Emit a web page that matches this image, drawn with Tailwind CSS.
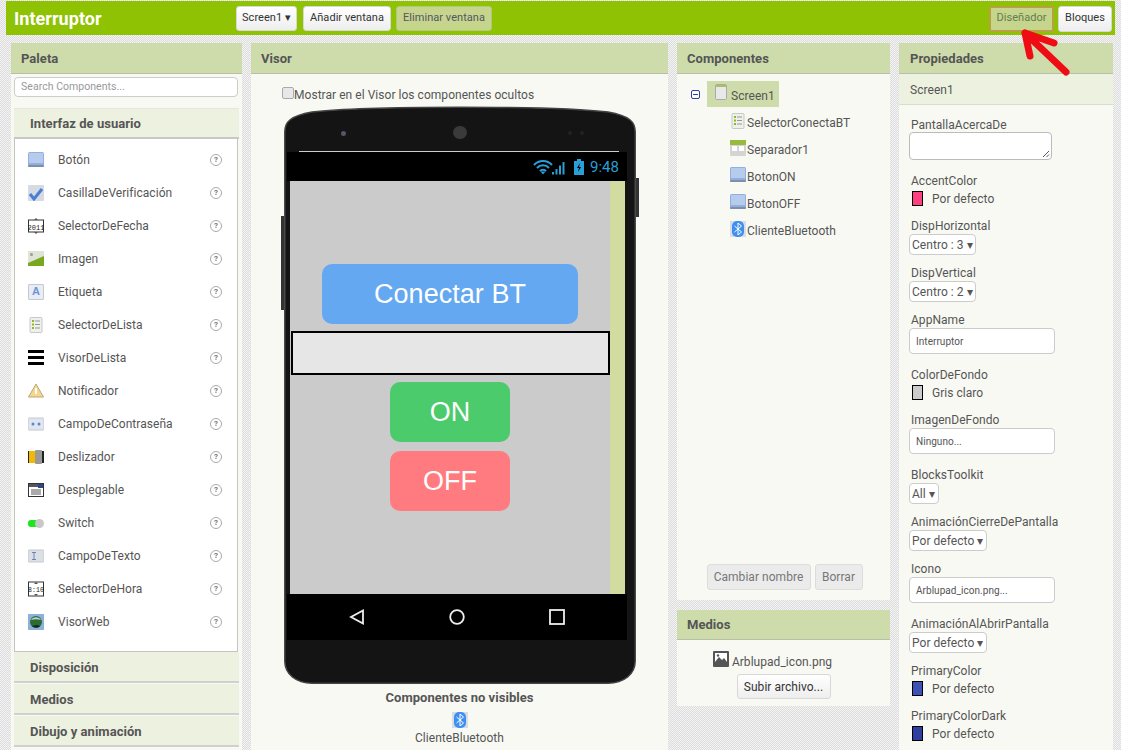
<!DOCTYPE html>
<html lang="es">
<head>
  <meta charset="UTF-8">
  <title>Interruptor</title>
  <script src="https://cdn.jsdelivr.net/npm/@tailwindcss/browser@4"></script>
</head>
<body class="font-['Roboto',sans-serif] text-[12px] tracking-[0.04px] text-[#555]">
<div class="relative h-[750px] w-[1121px] overflow-hidden bg-[repeating-conic-gradient(#dcdcdc_0_25%,#f4f4f4_0_50%)] bg-[length:2px_2px]">

  <!-- barra superior -->
  <div class="mx-[6px] mt-[1px] flex h-[34px] items-center bg-[#8fc202] pl-[8px] pr-[3px] pt-[1px]">
    <div class="w-[222px] text-[18px] leading-none font-bold text-white">Interruptor</div>
    <button class="h-[25px] w-[61px] rounded-[3px] border border-[#d8d8d8] bg-gradient-to-b from-white to-[#eee] text-[11px] text-[#333]">Screen1 ▾</button>
    <button class="ml-[6px] h-[25px] w-[88px] rounded-[3px] border border-[#d8d8d8] bg-gradient-to-b from-white to-[#eee] text-[11px] text-[#333]">Añadir ventana</button>
    <button class="ml-[5px] h-[25px] w-[96px] rounded-[3px] border border-[#b3c77e] bg-[#c5d68c] text-[11px] text-[#556]">Eliminar ventana</button>
    <div class="flex-1"></div>
    <button class="h-[26px] w-[65px] rounded-[2px] border-2 border-[#b9a045] bg-[#c5d68c] text-[11px] text-[#667a50]">Diseñador</button>
    <button class="ml-[4px] h-[26px] w-[54px] rounded-[3px] border border-[#d8d8d8] bg-gradient-to-b from-white to-[#eee] text-[11px] text-[#333]">Bloques</button>
  </div>

  <div class="mt-[8px] flex items-start pl-[11px]">

    <!-- Paleta -->
    <div class="h-[720px] w-[231px] bg-[#f8f9f3]">
      <div class="flex h-[31px] items-center border-b border-[#b8bfa8] bg-[#cddcaa] px-[10px] pt-[1px] text-[13px] font-bold">Paleta</div>
      <div class="px-[3px]">
        <div class="mt-[3px] flex h-[20px] w-[224px] items-center rounded-[4px] border border-[#ccc] bg-white px-[6px] text-[10.5px] text-[#999]">Search Components...</div>
        <div class="mt-[11px] flex h-[31px] items-center border-t border-b-2 border-t-[#e4e8d8] border-b-[#c8c8c8] bg-[#edf1e0] px-[16px] pt-[2px] text-[13px] font-bold">Interfaz de usuario</div>
        <div class="h-[513px] w-[224px] border-x border-b border-[#c4c4c4] bg-white pt-[4px]">

          <div class="flex h-[33px] items-center pl-[13px] pr-[15px]">
            <svg class="w-[16px] h-[16px]" viewBox="0 0 16 16"><rect width="16" height="15" rx="1.500" fill="#8fb0e0"/><rect x="1" y="1" width="14" height="10" fill="#b7ccec"/><rect y="13" width="16" height="2" rx="1" fill="#7f8faa"/></svg>
            <span class="ml-[14px] flex-1">Botón</span>
            <span class="flex h-[12px] w-[12px] items-center justify-center rounded-full border border-[#aaa] text-[8px] font-bold text-[#777]">?</span>
          </div>
          <div class="flex h-[33px] items-center pl-[13px] pr-[15px]">
            <svg class="w-[16px] h-[16px]" viewBox="0 0 16 16"><rect width="16" height="16" rx="1" fill="#d5dae3"/><path d="M2 9l4 5 8-10" stroke="#4b7fd0" stroke-width="3" fill="none"/></svg>
            <span class="ml-[14px] flex-1">CasillaDeVerificación</span>
            <span class="flex h-[12px] w-[12px] items-center justify-center rounded-full border border-[#aaa] text-[8px] font-bold text-[#777]">?</span>
          </div>
          <div class="flex h-[33px] items-center pl-[13px] pr-[15px]">
            <svg class="w-[16px] h-[16px]" viewBox="0 0 16 16"><rect x="0.5" y="2" width="15" height="12" fill="#fff" stroke="#333"/><path d="M8 0l2 2H6zM8 16l2-2H6z" fill="#555"/><text x="8" y="11.500" text-anchor="middle" font-size="7" font-family="Liberation Mono" fill="#222">2011</text></svg>
            <span class="ml-[14px] flex-1">SelectorDeFecha</span>
            <span class="flex h-[12px] w-[12px] items-center justify-center rounded-full border border-[#aaa] text-[8px] font-bold text-[#777]">?</span>
          </div>
          <div class="flex h-[33px] items-center pl-[13px] pr-[15px]">
            <svg class="w-[16px] h-[16px]" viewBox="0 0 16 16"><rect width="16" height="15" fill="#dfe5d6"/><path d="M0 12l16-7v10H0z" fill="#79a820"/><circle cx="3.5" cy="3.5" r="1.5" fill="#999"/></svg>
            <span class="ml-[14px] flex-1">Imagen</span>
            <span class="flex h-[12px] w-[12px] items-center justify-center rounded-full border border-[#aaa] text-[8px] font-bold text-[#777]">?</span>
          </div>
          <div class="flex h-[33px] items-center pl-[13px] pr-[15px]">
            <span class="flex h-[16px] w-[16px] items-center justify-center rounded-[1px] border border-[#c4c8d0] bg-[#e8edf5] font-['Liberation_Sans',sans-serif] text-[11px] font-bold text-[#6f96d4]">A</span>
            <span class="ml-[14px] flex-1">Etiqueta</span>
            <span class="flex h-[12px] w-[12px] items-center justify-center rounded-full border border-[#aaa] text-[8px] font-bold text-[#777]">?</span>
          </div>
          <div class="flex h-[33px] items-center pl-[13px] pr-[15px]">
            <svg class="w-[16px] h-[16px]" viewBox="0 0 16 16"><rect x="2" y="0.500" width="12" height="15" rx="1" fill="#eef0ea" stroke="#c8c8c8"/><path d="M4 4h2M4 7.500h2M4 11h2" stroke="#8fb52a" stroke-width="2"/><path d="M7 4h5M7 7.500h5M7 11h5" stroke="#999"/></svg>
            <span class="ml-[14px] flex-1">SelectorDeLista</span>
            <span class="flex h-[12px] w-[12px] items-center justify-center rounded-full border border-[#aaa] text-[8px] font-bold text-[#777]">?</span>
          </div>
          <div class="flex h-[33px] items-center pl-[13px] pr-[15px]">
            <svg class="w-[16px] h-[16px]" viewBox="0 0 16 16"><path d="M0 0h16v3H0zM0 6h16v3H0zM0 12h16v3H0z" fill="#000"/></svg>
            <span class="ml-[14px] flex-1">VisorDeLista</span>
            <span class="flex h-[12px] w-[12px] items-center justify-center rounded-full border border-[#aaa] text-[8px] font-bold text-[#777]">?</span>
          </div>
          <div class="flex h-[33px] items-center pl-[13px] pr-[15px]">
            <svg class="w-[16px] h-[16px]" viewBox="0 0 16 16"><path d="M8 1l7.500 13H.5z" fill="#f5d68a" stroke="#b8a878"/><path d="M8 5v6" stroke="#fff" stroke-width="2"/></svg>
            <span class="ml-[14px] flex-1">Notificador</span>
            <span class="flex h-[12px] w-[12px] items-center justify-center rounded-full border border-[#aaa] text-[8px] font-bold text-[#777]">?</span>
          </div>
          <div class="flex h-[33px] items-center pl-[13px] pr-[15px]">
            <svg class="w-[16px] h-[16px]" viewBox="0 0 16 16"><rect y="2" width="16" height="12" rx="1" fill="#dfe6f2" stroke="#c4c8d0"/><circle cx="5" cy="8" r="1.500" fill="#5b86c8"/><circle cx="11" cy="8" r="1.500" fill="#5b86c8"/></svg>
            <span class="ml-[14px] flex-1">CampoDeContraseña</span>
            <span class="flex h-[12px] w-[12px] items-center justify-center rounded-full border border-[#aaa] text-[8px] font-bold text-[#777]">?</span>
          </div>
          <div class="flex h-[33px] items-center pl-[13px] pr-[15px]">
            <svg class="w-[16px] h-[16px]" viewBox="0 0 16 16"><rect y="2" width="16" height="12" fill="#222"/><rect x="1" y="2" width="7" height="12" fill="#f5b800"/><rect x="7" y="1" width="7" height="14" rx="1" fill="#999"/></svg>
            <span class="ml-[14px] flex-1">Deslizador</span>
            <span class="flex h-[12px] w-[12px] items-center justify-center rounded-full border border-[#aaa] text-[8px] font-bold text-[#777]">?</span>
          </div>
          <div class="flex h-[33px] items-center pl-[13px] pr-[15px]">
            <svg class="w-[16px] h-[16px]" viewBox="0 0 16 16"><rect x="0.5" y="1.500" width="15" height="13" fill="#fff" stroke="#333"/><rect x="1" y="2" width="14" height="3" fill="#556"/><rect x="10" y="2" width="5" height="4" fill="#2f4a80"/><path d="M3 8h10M3 10h10M3 12h10" stroke="#555"/></svg>
            <span class="ml-[14px] flex-1">Desplegable</span>
            <span class="flex h-[12px] w-[12px] items-center justify-center rounded-full border border-[#aaa] text-[8px] font-bold text-[#777]">?</span>
          </div>
          <div class="flex h-[33px] items-center pl-[13px] pr-[15px]">
            <svg class="w-[16px] h-[16px]" viewBox="0 0 16 16"><rect y="5" width="11" height="7" rx="3" fill="#1ee61e"/><circle cx="11.500" cy="8.500" r="4.500" fill="#c8c8c8"/></svg>
            <span class="ml-[14px] flex-1">Switch</span>
            <span class="flex h-[12px] w-[12px] items-center justify-center rounded-full border border-[#aaa] text-[8px] font-bold text-[#777]">?</span>
          </div>
          <div class="flex h-[33px] items-center pl-[13px] pr-[15px]">
            <svg class="w-[16px] h-[16px]" viewBox="0 0 16 16"><rect y="2" width="16" height="12" rx="1" fill="#dcdfe6" stroke="#c4c8d0"/><path d="M4 4.500h4M4 11.500h4M6 4.500v7" stroke="#6c85b0" fill="none"/></svg>
            <span class="ml-[14px] flex-1">CampoDeTexto</span>
            <span class="flex h-[12px] w-[12px] items-center justify-center rounded-full border border-[#aaa] text-[8px] font-bold text-[#777]">?</span>
          </div>
          <div class="flex h-[33px] items-center pl-[13px] pr-[15px]">
            <svg class="w-[16px] h-[16px]" viewBox="0 0 16 16"><rect x="0.5" y="1" width="15" height="14" fill="#fff" stroke="#333"/><path d="M8 1l2 2H6zM8 15l2-2H6z" fill="#555"/><text x="8" y="10.500" text-anchor="middle" font-size="6.500" font-family="Liberation Mono" fill="#222">8:10</text></svg>
            <span class="ml-[14px] flex-1">SelectorDeHora</span>
            <span class="flex h-[12px] w-[12px] items-center justify-center rounded-full border border-[#aaa] text-[8px] font-bold text-[#777]">?</span>
          </div>
          <div class="flex h-[33px] items-center pl-[13px] pr-[15px]">
            <svg class="w-[16px] h-[16px]" viewBox="0 0 16 16"><rect width="16" height="16" fill="#8db0dc"/><circle cx="8" cy="8" r="6" fill="#2e6b2e"/><path d="M3 6a6 6 0 0 1 10 0c-3-1-7-1-10 0z" fill="#b8d0e8"/><path d="M4 12c3 2 6 2 8 0l-3-1z" fill="#123"/></svg>
            <span class="ml-[14px] flex-1">VisorWeb</span>
            <span class="flex h-[12px] w-[12px] items-center justify-center rounded-full border border-[#aaa] text-[8px] font-bold text-[#777]">?</span>
          </div>
        </div>
        <div class="flex h-[31px] items-center border-b-2 border-[#d0d0d0] bg-[#edf1e0] px-[16px] pt-[2px] text-[13px] font-bold">Disposición</div>
        <div class="mt-[1px] flex h-[31px] items-center border-b-2 border-[#d0d0d0] bg-[#edf1e0] px-[16px] pt-[2px] text-[13px] font-bold">Medios</div>
        <div class="mt-[1px] flex h-[31px] items-center border-b-2 border-[#d0d0d0] bg-[#edf1e0] px-[16px] pt-[2px] text-[13px] font-bold">Dibujo y animación</div>
      </div>
    </div>

    <!-- Visor -->
    <div class="ml-[9px] h-[720px] w-[417px] bg-[#f8f9f3]">
      <div class="flex h-[31px] items-center border-b border-[#b8bfa8] bg-[#cddcaa] px-[10px] pt-[1px] text-[13px] font-bold">Visor</div>
      <div class="flex h-[32px] items-center pl-[31px] pt-[10px]">
        <span class="mb-[5px] h-[12px] w-[12px] rounded-[2px] border border-[#aaa] bg-[#e8e8e8]"></span>
        <span>Mostrar en el Visor los componentes ocultos</span>
      </div>
      <div class="relative ml-[33px] h-[578px] w-[352px]">
        <svg class="absolute inset-0 w-[352px] h-[578px]" viewBox="0 0 352 578"><path d="M.8 26C.8 16 6 10 28 6C80-.5 272-.5 324 6C346 10 351.200 16 351.200 26V555C351.200 568 340 577.200 324 577.200H28C12 577.200.8 568 .8 555Z" fill="#141414" stroke="#444" stroke-width="1.500"/></svg>
        <span class="absolute left-[-3px] top-[110px] h-[94px] w-[3px] bg-[#333]"></span>
        <span class="absolute right-[-3px] top-[72px] h-[39px] w-[3px] bg-[#333]"></span>
        <span class="absolute left-[57px] top-[25px] h-[5px] w-[5px] rounded-full bg-[#556]"></span>
        <span class="absolute left-[169px] top-[20px] h-[13px] w-[14px] rounded-full bg-[#3a3a3a]"></span>
        <span class="absolute left-[284px] top-[25px] h-[4px] w-[4px] rounded-full bg-[#222]"></span>
        <span class="absolute left-[296px] top-[25px] h-[4px] w-[4px] rounded-full bg-[#222]"></span>
        <div class="relative pt-[45px]">
          <div class="ml-[15px] h-[1px] w-[320px] bg-[#ccc]"></div>
          <div class="ml-[3px] flex h-[29px] w-[340px] items-center justify-end bg-black pr-[8px] pt-[1px]">
            <svg class="w-[34px] h-[16px]" viewBox="0 0 34 16"><path d="M1 6a12 12 0 0 1 18 0M4 9a8 8 0 0 1 12 0M7 12a4 4 0 0 1 6 0" stroke="#2a9fd6" stroke-width="2" fill="none"/><path d="M10 15.500L7.500 12.500h5zM19 13h2v2.500h-2zM22.500 10h2v5.500h-2zM26 6.500h2v9h-2zM29.500 3h2v12.500h-2z" fill="#2a9fd6"/></svg>
            <svg class="ml-[7px] w-[10px] h-[16px]" viewBox="0 0 10 16"><path d="M3 0h4v2h3v14H0V2h3z" fill="#2a9fd6"/><path d="M6 4L3 9h2l-1 4 3-5H5z" fill="#000"/></svg>
            <span class="ml-[6px] text-[15px] leading-none text-[#2a9fd6]">9:48</span>
          </div>
          <div class="ml-[6px] flex h-[413px] w-[335px]">
            <div class="w-[320px] bg-[#cbcbcb] pt-[83px]">
              <div class="ml-[32px] flex h-[60px] w-[256px] items-center justify-center rounded-[10px] bg-[#64a8f2] font-['Liberation_Sans',sans-serif] text-[27px] text-white">Conectar BT</div>
              <div class="ml-[1px] mt-[7px] h-[44px] w-[319px] border-2 border-black bg-[#e6e6e6]"></div>
              <div class="ml-[100px] mt-[7px] flex h-[60px] w-[120px] items-center justify-center rounded-[10px] bg-[#4ccb6c] font-['Liberation_Sans',sans-serif] text-[27px] text-white">ON</div>
              <div class="ml-[100px] mt-[9px] flex h-[60px] w-[120px] items-center justify-center rounded-[10px] bg-[#ff7b80] font-['Liberation_Sans',sans-serif] text-[27px] text-white">OFF</div>
            </div>
            <div class="w-[15px] bg-[#d2dca0]"></div>
          </div>
          <div class="ml-[3px] flex h-[46px] w-[340px] items-center bg-black">
            <svg class="ml-[62px] w-[16px] h-[16px]" viewBox="0 0 16 16"><path d="M14 1.500v13L2 8z" stroke="#eee" stroke-width="1.800" fill="none"/></svg>
            <svg class="ml-[84px] w-[16px] h-[16px]" viewBox="0 0 16 16"><circle cx="8" cy="8" r="6.800" stroke="#eee" stroke-width="1.800" fill="none"/></svg>
            <svg class="ml-[84px] w-[16px] h-[16px]" viewBox="0 0 16 16"><rect x="1" y="1" width="14" height="14" stroke="#eee" stroke-width="1.800" fill="none"/></svg>
          </div>
        </div>
      </div>
      <div class="mt-[4px] text-center text-[13px] font-bold">Componentes no visibles</div>
      <div class="mt-[4px] flex flex-col items-center">
        <svg class="w-[16px] h-[16px]" viewBox="0 0 16 16"><rect width="16" height="16" fill="#d8dde4"/><rect x="2" width="12" height="16" rx="5" fill="#3f8ff0"/><path d="M4.500 5l7 6L8 14V2l3.500 3-7 6" stroke="#fff" fill="none"/></svg>
        <span class="mt-[1px]">ClienteBluetooth</span>
      </div>
    </div>

    <!-- Componentes y Medios -->
    <div class="ml-[9px] w-[213px]">
      <div class="h-[557px] bg-[#f8f9f3]">
        <div class="flex h-[31px] items-center border-b border-[#b8bfa8] bg-[#cddcaa] px-[10px] pt-[1px] text-[13px] font-bold">Componentes</div>
        <div class="h-[490px] pl-[14px] pt-[7px]">
          <div class="flex h-[26px] items-center">
            <span class="flex h-[9px] w-[9px] items-center justify-center rounded-[2px] border border-[#2b3fa8] bg-white"><span class="h-[1px] w-[5px] bg-[#2b3fa8]"></span></span>
            <div class="ml-[7px] flex h-[26px] w-[72px] items-center bg-[#cddcaa] pl-[8px]">
              <svg class="mb-[5px] w-[12px] h-[16px]" viewBox="0 0 12 16"><rect x="0.500" y="0.500" width="11" height="15" rx="1" fill="#e8e8e8" stroke="#aaa"/><rect x="1" y="1" width="10" height="2" fill="#a5c35a"/></svg>
              <span class="ml-[4px] pt-[3px]">Screen1</span>
            </div>
          </div>
          <div class="ml-[39px] mt-[2px] flex h-[27px] items-center">
            <svg class="mb-[4px] w-[16px] h-[16px]" viewBox="0 0 16 16"><rect x="2" y="0.500" width="12" height="15" rx="1" fill="#eef0ea" stroke="#c8c8c8"/><path d="M4 4h2M4 7.500h2M4 11h2" stroke="#8fb52a" stroke-width="2"/><path d="M7 4h5M7 7.500h5M7 11h5" stroke="#999"/></svg>
            <span class="ml-[1px]">SelectorConectaBT</span>
          </div>
          <div class="ml-[39px] flex h-[27px] items-center">
            <svg class="mb-[4px] w-[16px] h-[16px]" viewBox="0 0 16 16"><rect width="16" height="16" rx="1" fill="#d4d4d4"/><rect width="16" height="5" fill="#95bc3c"/><rect x="2" y="6" width="5" height="5" fill="#fff"/><rect x="9" y="6" width="5" height="5" fill="#fff"/></svg>
            <span class="ml-[1px]">Separador1</span>
          </div>
          <div class="ml-[39px] flex h-[27px] items-center">
            <svg class="mb-[4px] w-[16px] h-[16px]" viewBox="0 0 16 16"><rect width="16" height="15" rx="1.500" fill="#8fb0e0"/><rect x="1" y="1" width="14" height="10" fill="#b7ccec"/><rect y="13" width="16" height="2" rx="1" fill="#7f8faa"/></svg>
            <span class="ml-[1px]">BotonON</span>
          </div>
          <div class="ml-[39px] flex h-[27px] items-center">
            <svg class="mb-[4px] w-[16px] h-[16px]" viewBox="0 0 16 16"><rect width="16" height="15" rx="1.500" fill="#8fb0e0"/><rect x="1" y="1" width="14" height="10" fill="#b7ccec"/><rect y="13" width="16" height="2" rx="1" fill="#7f8faa"/></svg>
            <span class="ml-[1px]">BotonOFF</span>
          </div>
          <div class="ml-[39px] flex h-[27px] items-center">
            <svg class="mb-[4px] w-[16px] h-[16px]" viewBox="0 0 16 16"><rect width="16" height="16" fill="#d8dde4"/><rect x="2" width="12" height="16" rx="5" fill="#3f8ff0"/><path d="M4.500 5l7 6L8 14V2l3.500 3-7 6" stroke="#fff" fill="none"/></svg>
            <span class="ml-[1px]">ClienteBluetooth</span>
          </div>
        </div>
        <div class="flex justify-center gap-[4px] pl-[2px]">
          <button class="h-[26px] w-[104px] rounded-[3px] border border-[#ddd] bg-[#ebebeb] text-[12px] text-[#777]">Cambiar nombre</button>
          <button class="h-[26px] w-[48px] rounded-[3px] border border-[#ddd] bg-[#ebebeb] text-[12px] text-[#777]">Borrar</button>
        </div>
      </div>
      <div class="mt-[10px] h-[96px] bg-[#f8f9f3]">
        <div class="flex h-[30px] items-center border-b border-[#b8bfa8] bg-[#cddcaa] px-[10px] text-[13px] font-bold">Medios</div>
        <div class="flex flex-col items-center pt-[13px]">
          <div class="flex h-[18px] items-center pr-[22px]">
            <svg class="mb-[6px] w-[16px] h-[16px]" viewBox="0 0 16 16"><path d="M1 0h14a1 1 0 0 1 1 1v14a1 1 0 0 1-1 1H1a1 1 0 0 1-1-1V1a1 1 0 0 1 1-1z" fill="#555"/><rect x="2" y="2" width="12" height="9" fill="#fff"/><path d="M2 11l4-5 3 3 2-2 3 4z" fill="#555"/><circle cx="5" cy="4.500" r="1.200" fill="#555"/></svg>
            <span class="ml-[3px]">Arblupad_icon.png</span>
          </div>
          <button class="mt-[3px] h-[25px] w-[94px] rounded-[3px] border border-[#d8d8d8] bg-gradient-to-b from-white to-[#eee] text-[12px] text-[#333]">Subir archivo...</button>
        </div>
      </div>
    </div>

    <!-- Propiedades -->
    <div class="ml-[9px] h-[720px] w-[214px] bg-[#f8f9f3]">
      <div class="flex h-[31px] items-center border-b border-[#b8bfa8] bg-[#cddcaa] px-[11px] pt-[1px] text-[13px] font-bold">Propiedades</div>
      <div class="flex h-[31px] items-center border-b border-[#d8dcc8] bg-[#edf1e0] px-[11px] pt-[2px]">Screen1</div>
      <div class="pl-[10px] pt-[12px]">
        <div class="h-[16px] leading-[16px] pl-[2px]">PantallaAcercaDe</div>
        <div class="relative -mt-[1px] h-[28px] w-[143px] rounded-[4px] border border-[#bbb] bg-white">
          <svg class="absolute bottom-[1px] right-[1px] w-[8px] h-[8px]" viewBox="0 0 8 8"><path d="M1 7l6-6M4.500 7l2.500-2.500" stroke="#555"/></svg>
        </div>
        <div class="mt-[13px] h-[16px] leading-[16px] pl-[2px]">AccentColor</div>
        <div class="ml-[3px] mt-[2px] flex h-[15px] items-center"><span class="h-[15px] w-[11px] border border-black bg-[#ff4081]"></span><span class="ml-[9px]">Por defecto</span></div>
        <div class="mt-[12px] h-[16px] leading-[16px] pl-[2px]">DispHorizontal</div>
        <div class="flex h-[21px] w-[67px] items-center rounded-[4px] border border-[#ccc] bg-white pl-[2px]">Centro : 3 ▾</div>
        <div class="mt-[10px] h-[16px] leading-[16px] pl-[2px]">DispVertical</div>
        <div class="flex h-[21px] w-[67px] items-center rounded-[4px] border border-[#ccc] bg-white pl-[2px]">Centro : 2 ▾</div>
        <div class="mt-[10px] h-[16px] leading-[16px] pl-[2px]">AppName</div>
        <div class="flex h-[26px] w-[146px] items-center rounded-[4px] border border-[#ccc] bg-white pl-[6px] text-[10px]">Interruptor</div>
        <div class="mt-[13px] h-[16px] leading-[16px] pl-[2px]">ColorDeFondo</div>
        <div class="ml-[3px] mt-[2px] flex h-[15px] items-center"><span class="h-[15px] w-[11px] border border-black bg-[#ccc]"></span><span class="ml-[9px]">Gris claro</span></div>
        <div class="mt-[12px] h-[16px] leading-[16px] pl-[2px]">ImagenDeFondo</div>
        <div class="flex h-[26px] w-[146px] items-center rounded-[4px] border border-[#ccc] bg-white pl-[6px] text-[10px]">Ninguno...</div>
        <div class="mt-[13px] h-[16px] leading-[16px] pl-[2px]">BlocksToolkit</div>
        <div class="flex h-[21px] w-[30px] items-center rounded-[4px] border border-[#ccc] bg-white pl-[2px]">All ▾</div>
        <div class="mt-[10px] h-[16px] leading-[16px] pl-[2px]">AnimaciónCierreDePantalla</div>
        <div class="flex h-[21px] w-[78px] items-center rounded-[4px] border border-[#ccc] bg-white pl-[2px]">Por defecto ▾</div>
        <div class="mt-[10px] h-[16px] leading-[16px] pl-[2px]">Icono</div>
        <div class="flex h-[26px] w-[146px] items-center rounded-[4px] border border-[#ccc] bg-white pl-[6px] text-[10px]">Arblupad_icon.png...</div>
        <div class="mt-[13px] h-[16px] leading-[16px] pl-[2px]">AnimaciónAlAbrirPantalla</div>
        <div class="flex h-[21px] w-[78px] items-center rounded-[4px] border border-[#ccc] bg-white pl-[2px]">Por defecto ▾</div>
        <div class="mt-[10px] h-[16px] leading-[16px] pl-[2px]">PrimaryColor</div>
        <div class="ml-[3px] mt-[2px] flex h-[15px] items-center"><span class="h-[15px] w-[11px] border border-black bg-[#3f51b5]"></span><span class="ml-[9px]">Por defecto</span></div>
        <div class="mt-[12px] h-[16px] leading-[16px] pl-[2px]">PrimaryColorDark</div>
        <div class="ml-[3px] mt-[2px] flex h-[15px] items-center"><span class="h-[15px] w-[11px] border border-black bg-[#303f9f]"></span><span class="ml-[9px]">Por defecto</span></div>
      </div>
    </div>
  </div>

  <!-- flecha roja sobre la captura -->
  <svg class="absolute left-[1015px] top-[25px] w-[60px] h-[55px]" viewBox="0 0 60 55"><path d="M10 8l41 39M10 8l5 23M10 8l29 10" stroke="#f00c14" stroke-width="7" stroke-linecap="round" fill="none"/></svg>
</div>
</body>
</html>
